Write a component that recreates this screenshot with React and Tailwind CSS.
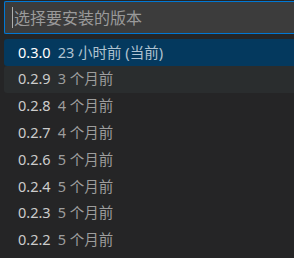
const versions = [
  { v: '0.3.0', when: '23 小时前 (当前)' },
  { v: '0.2.9', when: '3 个月前' },
  { v: '0.2.8', when: '4 个月前' },
  { v: '0.2.7', when: '4 个月前' },
  { v: '0.2.6', when: '5 个月前' },
  { v: '0.2.4', when: '5 个月前' },
  { v: '0.2.3', when: '5 个月前' },
  { v: '0.2.2', when: '5 个月前' },
];

function VersionRow({ item, selected, hovered }) {
  const bg = selected ? 'bg-[#04395e]' : hovered ? 'bg-[#2a2d2e]' : '';
  return (
    <div className={`flex items-center h-[26.8px] pl-[14px] rounded-l-[3px] ${bg}`}>
      <span className={selected ? 'text-white' : 'text-[#cccccc]'}>{item.v}</span>
      <span className={`ml-[7px] ${selected ? 'text-[#b0c3d1]' : 'text-[#9d9d9d]'}`}>{item.when}</span>
    </div>
  );
}

export default function App() {
  return (
    <div
      className="w-[294px] h-[258px] overflow-hidden bg-[#252526] pl-[4px] pt-[1px]"
      style={{ fontFamily: '"Noto Sans", "Noto Sans CJK SC", sans-serif' }}
    >
      <div className="flex items-center h-[33px] bg-[#3c3c3c] border border-r-0 border-[#0078d4] rounded-l-[2px] pl-[7px] text-[16px] text-[#9a9a9a]">
        <span className="w-px h-[21px] bg-[#aeafad]" />
        <span className="ml-px">选择要安装的版本</span>
      </div>
      <div className="mt-[5px] text-[14.5px]">
        {versions.map((item, i) => (
          <VersionRow key={item.v} item={item} selected={i === 0} hovered={i === 1} />
        ))}
      </div>
    </div>
  );
}
